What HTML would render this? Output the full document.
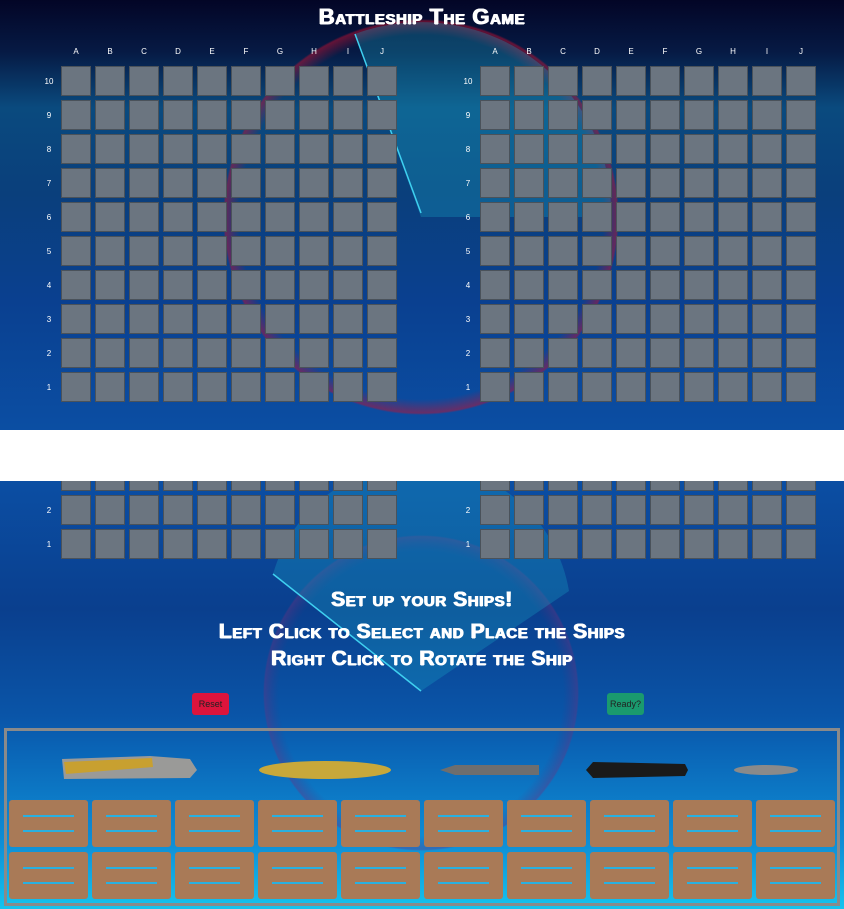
<!DOCTYPE html>
<html><head><meta charset="utf-8"><style>
*{margin:0;padding:0;box-sizing:border-box}
body{width:844px;height:909px;background:#fff;position:relative;overflow:hidden;font-family:"Liberation Sans",sans-serif}
.sec{position:absolute;left:0;width:844px;overflow:hidden}
#top{top:0;height:430px;background:linear-gradient(#030526 0%,#061a44 12%,#0a4a7e 25%,#0a3f7c 45%,#0a4090 70%,#0b4ea3 100%)}
#bot{top:481px;height:428px;background:linear-gradient(#0b4ea3 0%,#0a3f8e 30%,#0a55a8 55%,#0a63b5 62%,#0f8fd6 85%,#15c4ee 100%)}
.cell{position:absolute;width:30px;height:30px;background:#6b7580;border:1px solid #4a525a}
.lbl{position:absolute;color:#fff;font-size:8px;text-align:center;width:20px}
.title{position:absolute;left:0;width:844px;text-align:center;color:#fff;font-weight:900;font-variant:small-caps;letter-spacing:0.6px;text-shadow:0.6px 0 0 #fff,-0.6px 0 0 #fff,0 0.5px 0 #fff}
.dock{position:absolute;width:79px;height:47px;background:#a97a57;border-radius:3px}
.dock i{position:absolute;left:14px;right:14px;height:2px;background:#2ab0e0}
.btn{position:absolute;font-size:9px;color:#222;text-align:center;line-height:22px;border-radius:3px;width:37px;height:22px}
</style></head><body>
<div class="sec" id="top">
<svg width="844" height="430" style="position:absolute;left:0;top:0">
<defs><radialGradient id="rg"><stop offset="0.92" stop-color="#c01030" stop-opacity="0"/><stop offset="0.99" stop-color="#c01030" stop-opacity="0.5"/><stop offset="1" stop-color="#c01030" stop-opacity="0"/></radialGradient></defs>
<circle cx="421" cy="217" r="198" fill="url(#rg)"/>
<path d="M421 217 L355 34 A190 190 0 0 1 611 217 Z" fill="#1aa6c8" opacity="0.3"/>
<line x1="421" y1="213" x2="355" y2="34" stroke="#3fd0f0" stroke-width="1.5"/>
</svg>
<div class="title" style="top:4px;font-size:22px">Battleship The Game</div>
<div id="g1"></div>
</div>
<div class="sec" id="bot">
<svg width="844" height="428" style="position:absolute;left:0;top:0">
<defs><radialGradient id="rg2"><stop offset="0.9" stop-color="#4a3080" stop-opacity="0"/><stop offset="0.99" stop-color="#6a3080" stop-opacity="0.4"/><stop offset="1" stop-color="#6a3080" stop-opacity="0"/></radialGradient></defs>
<circle cx="421" cy="212" r="158" fill="url(#rg2)"/>
<path d="M421 210 L273 93 A152 152 0 0 1 569 110 Z" fill="#1aa6c8" opacity="0.3"/>
<line x1="421" y1="210" x2="273" y2="93" stroke="#3fd0f0" stroke-width="1.5"/>
</svg>
<div class="title" style="top:107px;font-size:21px">Set up your Ships!</div>
<div class="title" style="top:139px;font-size:21px">Left Click to Select and Place the Ships</div>
<div class="title" style="top:166px;font-size:21px">Right Click to Rotate the Ship</div>
<div class="btn" style="left:192px;top:212px;background:#dc143c">Reset</div>
<div class="btn" style="left:607px;top:212px;background:#1a9a6e">Ready?</div>
<div style="position:absolute;left:4px;top:247px;width:836px;height:178px;border:3px solid #8a8a8a"></div>
<svg width="844" height="428" style="position:absolute;left:0;top:0">
<path d="M62 278 L150 275 L190 278 L197 289 L190 297 L64 298 Z" fill="#9a9a98"/>
<path d="M64 281 L152 277 L153 286 L66 293 Z" fill="#c8a030"/>
<ellipse cx="325" cy="289" rx="66" ry="9" fill="#c8a83a"/>
<path d="M440 289 L455 284 L539 284 L539 294 L455 294 Z" fill="#6e6e6e"/>
<path d="M586 289 L593 281 L685 283 L688 289 L685 295 L593 297 Z" fill="#1a1a1a"/>
<ellipse cx="766" cy="289" rx="32" ry="5" fill="#8a8a8a"/>
</svg>
<div id="g2"></div><div id="d"></div>
</div>
<script>
var cols="ABCDEFGHIJ";
function grid(top,rows,showLetters){var s="";
for(var g=0;g<2;g++){var x0=g?480:61;
 if(showLetters)for(var c=0;c<10;c++)s+='<div class="lbl" style="left:'+(x0+5+c*34)+'px;top:'+(top-19)+'px">'+cols[c]+'</div>';
 for(var r=0;r<rows.length;r++){var y=top+r*34;
  s+='<div class="lbl" style="left:'+(x0-22)+'px;top:'+(y+11)+'px">'+rows[r]+'</div>';
  for(var c=0;c<10;c++)s+='<div class="cell" style="left:'+(x0+c*34)+'px;top:'+y+'px"></div>';}}
return s;}
document.getElementById('g1').innerHTML=grid(66,[10,9,8,7,6,5,4,3,2,1],true);
document.getElementById('g2').innerHTML=grid(-20,["",2,1],false);
var d="";for(var r=0;r<2;r++)for(var c=0;c<10;c++)d+='<div class="dock" style="left:'+(9+c*83)+'px;top:'+(319+r*52)+'px"><i style="top:15px"></i><i style="top:30px"></i></div>';
document.getElementById('d').innerHTML=d;
</script>
</body></html>
